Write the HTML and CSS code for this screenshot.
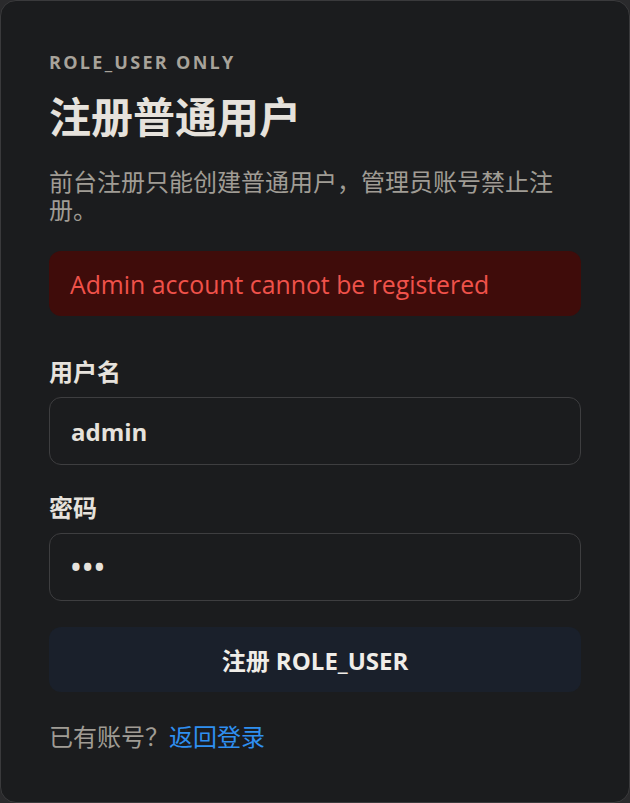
FILE: index.html
```html
<!DOCTYPE html>
<html lang="zh-CN">
<head>
<meta charset="utf-8">
<title>注册普通用户</title>
<link rel="stylesheet" href="styles.css">
</head>
<body>
<main class="card">
  <div class="eyebrow">ROLE_USER ONLY</div>
  <h1 class="title">注册普通用户</h1>
  <p class="desc">前台注册只能创建普通用户，管理员账号禁止注册。</p>
  <div class="alert">Admin account cannot be registered</div>
  <form class="form">
    <label class="field">
      <span class="label">用户名</span>
      <input class="input" type="text" value="admin">
    </label>
    <label class="field">
      <span class="label">密码</span>
      <input class="input input-password" type="password" value="123">
    </label>
    <button class="submit" type="button">注册 ROLE_USER</button>
  </form>
  <p class="footer">已有账号？<a class="link" href="#">返回登录</a></p>
</main>
</body>
</html>
```
FILE: styles.css
```css
* { box-sizing: border-box; }
html, body { margin: 0; padding: 0; background: #2a2a2c; }
body {
  font-family: "Open Sans", "Noto Sans CJK SC", sans-serif;
  color: #e6e2dc;
}
.card {
  width: 630px;
  height: 803px;
  background: #1b1c1e;
  border: 1px solid #3a3a3c;
  border-radius: 16px;
  padding: 49px 48px 0 48px;
}
.eyebrow {
  font-size: 18px;
  font-weight: 700;
  letter-spacing: 2.3px;
  color: #a8a39a;
  line-height: 24px;
}
.title {
  margin: 18px 0 0 0;
  font-size: 42px;
  line-height: 50px;
  font-weight: 700;
  color: #e6e2dc;
}
.desc {
  margin: 26px 0 0 0;
  font-size: 24px;
  line-height: 28px;
  color: #a09c95;
}
.alert {
  margin-top: 27px;
  height: 65px;
  display: flex;
  align-items: center;
  padding: 0 21px;
  background: #3f0c0a;
  border-radius: 12px;
  color: #f0524a;
  font-size: 24.8px;
}
.form {
  margin-top: 41px;
  display: flex;
  flex-direction: column;
}
.field {
  display: flex;
  flex-direction: column;
  margin-bottom: 26px;
}
.field:first-child { margin-bottom: 28px; }
.label {
  font-size: 24px;
  font-weight: 700;
  line-height: 30px;
  margin-bottom: 10px;
  color: #e6e2dc;
}
.input {
  height: 68px;
  width: 100%;
  background: #1b1c1e;
  border: 1px solid #3e3e40;
  border-radius: 12px;
  padding: 0 21px;
  font-family: "Open Sans", "Noto Sans CJK SC", sans-serif;
  font-size: 24px;
  font-weight: 700;
  color: #e6e2dc;
  outline: none;
}
.input-password {
  letter-spacing: 2px;
  font-size: 26px;
}
.submit {
  height: 65px;
  border: none;
  border-radius: 12px;
  background: #1a202b;
  color: #f0ede8;
  font-family: "Open Sans", "Noto Sans CJK SC", sans-serif;
  font-size: 24px;
  font-weight: 700;
}
.footer {
  margin: 30px 0 0 0;
  font-size: 24px;
  line-height: 30px;
  color: #a09c95;
}
.link {
  color: #2f8ff0;
  text-decoration: none;
}
```
